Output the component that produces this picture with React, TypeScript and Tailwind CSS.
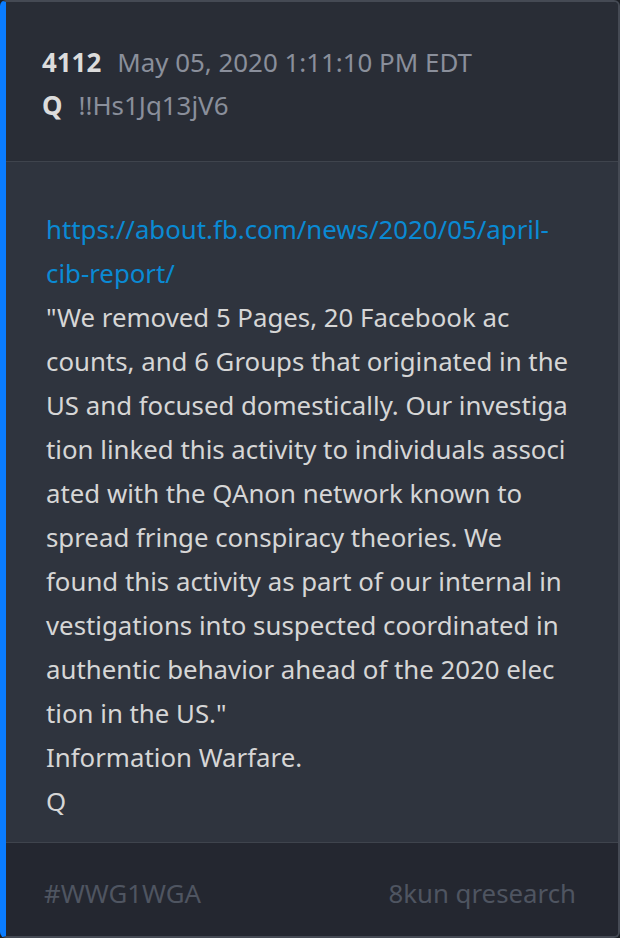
import React from "react";

const bodyLines = [
  '"We removed 5 Pages, 20 Facebook ac',
  "counts, and 6 Groups that originated in the",
  "US and focused domestically. Our investiga",
  "tion linked this activity to individuals associ",
  "ated with the QAnon network known to",
  "spread fringe conspiracy theories. We",
  "found this activity as part of our internal in",
  "vestigations into suspected coordinated in",
  "authentic behavior ahead of the 2020 elec",
  'tion in the US."',
  "Information Warfare.",
  "Q",
];

export default function App() {
  return (
    <div className="min-h-screen bg-[#1c1f25] font-['Noto_Sans',sans-serif]">
      <article className="flex h-[938px] w-[620px] flex-col overflow-hidden rounded-[6px] border-y-2 border-r-2 border-l-[6px] border-y-[#454a54] border-r-[#454a54] border-l-[#0a7cff] bg-[#2f343e]">
        <header className="border-b border-[#3f444d] bg-[#292d36] pl-[36px] pr-10 pt-[39px] pb-[34px] text-[25.9px] leading-[43px]">
          <div className="flex items-baseline gap-[16px]">
            <span className="font-bold text-[#dcdcdc]">4112</span>
            <span className="text-[#8a8f9b]">May 05, 2020 1:11:10 PM EDT</span>
          </div>
          <div className="flex items-baseline gap-[16px]">
            <span className="font-bold text-[#dcdcdc]">Q</span>
            <span className="text-[#8a8f9b]">!!Hs1Jq13jV6</span>
          </div>
        </header>

        <section className="flex-1 px-[40px] pt-[45px] pb-[18px] text-[25.8px] leading-[44px] text-[#d6d6d6]">
          <a href="#" className="block text-[#0a8ad4]">
            https://about.fb.com/news/2020/05/april-
            <br />
            cib-report/
          </a>
          {bodyLines.map((line, i) => (
            <p key={i}>{line}</p>
          ))}
        </section>

        <footer className="flex h-[94px] items-center justify-between border-t border-[#3f444d] bg-[#242730] pl-[38px] pr-[42px] pt-[6px] text-[25.8px] leading-[44px] text-[#4f5561]">
          <span>#WWG1WGA</span>
          <span>8kun qresearch</span>
        </footer>
      </article>
    </div>
  );
}
